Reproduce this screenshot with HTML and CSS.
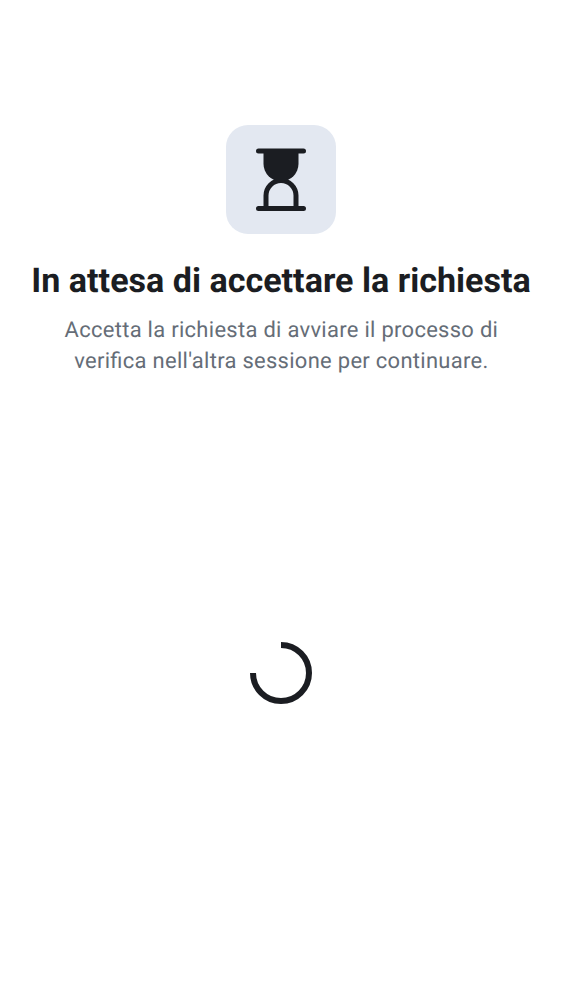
FILE: index.html
```html
<!DOCTYPE html>
<html lang="it">
<head>
<meta charset="utf-8">
<title>Verifica</title>
<link rel="stylesheet" href="styles.css">
</head>
<body>
<main class="screen">
  <div class="icon-tile">
    <svg class="hourglass" viewBox="0 0 50 64">
      <path class="line" d="M2.500 3H47.500M2.500 60.500H47.500"/>
      <path class="line" d="M10 60V47.500A15 15 0 0 1 40 47.500V60"/>
      <path class="sand" d="M7.500 3H42.500V15.800A17.500 17.500 0 0 1 7.500 15.800Z"/>
    </svg>
  </div>
  <h1 class="title">In attesa di accettare la richiesta</h1>
  <p class="subtitle">Accetta la richiesta di avviare il processo di<br>verifica nell'altra sessione per continuare.</p>
  <svg class="spinner" viewBox="0 0 62 62">
    <path d="M31 3A28 28 0 1 1 3 31"/>
  </svg>
</main>
</body>
</html>
```
FILE: styles.css
```css
body {
  margin: 0;
  background: #fff;
  font-family: Roboto, sans-serif;
  text-rendering: geometricPrecision;
}
.screen {
  display: flex;
  flex-direction: column;
  align-items: center;
  box-sizing: border-box;
  height: 1000px;
  padding-top: 125px;
  text-align: center;
}
.icon-tile {
  display: flex;
  justify-content: center;
  align-items: center;
  width: 109.4px;
  height: 109.4px;
  border-radius: 22px;
  background: #e3e8f1;
}
.hourglass {
  width: 50px;
  height: 64px;
}
.line {
  fill: none;
  stroke: #1b1d22;
  stroke-width: 5;
  stroke-linecap: round;
}
.sand {
  fill: #1b1d22;
}
.title {
  margin: 24.6px 0 0;
  color: #1b1d22;
  font-size: 34.1px;
  font-weight: 700;
  line-height: 44px;
  white-space: nowrap;
}
.subtitle {
  margin: 12px 0 0;
  padding-left: 0.8px;
  color: #656d77;
  font-size: 21.95px;
  font-feature-settings: "liga" 1;
  letter-spacing: 0.3px;
  line-height: 31px;
  white-space: nowrap;
}
.spinner {
  width: 62px;
  height: 62px;
  margin-top: 265px;
  fill: none;
  stroke: #1b1d22;
  stroke-width: 6;
}
```
